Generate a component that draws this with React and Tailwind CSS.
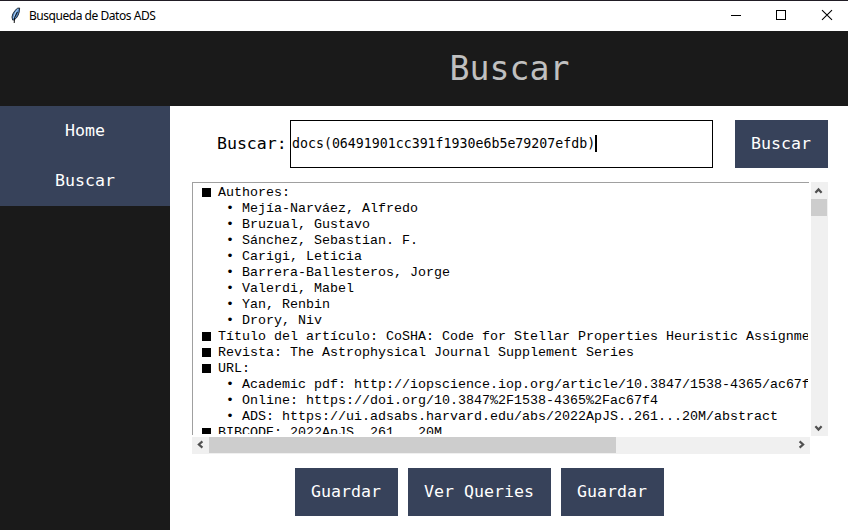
import React from "react";

const mono = "font-['DejaVu_Sans_Mono',monospace]";

const rows = [
  [0, "Authores:"],
  [1, "Mejía-Narváez, Alfredo"],
  [1, "Bruzual, Gustavo"],
  [1, "Sánchez, Sebastian. F."],
  [1, "Carigi, Leticia"],
  [1, "Barrera-Ballesteros, Jorge"],
  [1, "Valerdi, Mabel"],
  [1, "Yan, Renbin"],
  [1, "Drory, Niv"],
  [0, "Título del artículo: CoSHA: Code for Stellar Properties Heuristic Assignme"],
  [0, "Revista: The Astrophysical Journal Supplement Series"],
  [0, "URL:"],
  [1, "Academic pdf: http://iopscience.iop.org/article/10.3847/1538-4365/ac67f"],
  [1, "Online: https://doi.org/10.3847%2F1538-4365%2Fac67f4"],
  [1, "ADS: https://ui.adsabs.harvard.edu/abs/2022ApJS..261...20M/abstract"],
  [0, "BIBCODE: 2022ApJS..261...20M"],
];

function Feather() {
  return (
    <svg width="12" height="18" viewBox="0 0 12 18" className="shrink-0">
      <path d="M2.6 13 2 10 2.8 7 5 3.5 7.5 1.3 9.6 1 9.2 5 8.2 8 6.4 11 4 13Z" fill="#4e86c8" stroke="#26303c" strokeWidth="1" />
      <path d="M8 2.2 5.2 6 3.6 11" fill="none" stroke="#b9d7f2" strokeWidth="1" />
      <path d="M7.4 5 4.6 10.5 4.2 16" fill="none" stroke="#111" strokeWidth="1" />
    </svg>
  );
}

const chevrons = {
  up: "M4.4 10.8 7.5 7.4 10.6 10.8",
  down: "M4.4 7.2 7.5 10.6 10.6 7.2",
  left: "M10.4 4.4 6.9 7.5 10.4 10.6",
  right: "M6.6 4.4 10.1 7.5 6.6 10.6",
};

function Chevron({ to }) {
  return (
    <svg width="17" height="17" viewBox="0 0 17 17" className="block shrink-0">
      <path d={chevrons[to]} fill="none" stroke="#505050" strokeWidth="2.2" />
    </svg>
  );
}

function Button({ children, className }) {
  return (
    <button className={"h-12 shrink-0 bg-[#37425a] pt-px pr-px text-[16.6px] text-white " + className}>
      {children}
    </button>
  );
}

export default function App() {
  return (
    <div className={"flex h-[530px] w-[848px] flex-col overflow-hidden bg-white text-black " + mono}>
      <div className="flex h-[31px] shrink-0 items-center border-t border-[#211d25] pl-[10px] font-['Noto_Sans',sans-serif]">
        <Feather />
        <span className="ml-[7px] w-[127px] text-[12px] tracking-[-0.46px] whitespace-nowrap">Busqueda de Datos ADS</span>
        <svg className="ml-auto" width="118" height="30" viewBox="730 1 118 30" fill="none" stroke="#000">
          <path d="M731 15.5h10M776.5 10.5h9v9h-9z" shapeRendering="crispEdges" />
          <path d="M822 10.2l10 9.6M832 10.2l-10 9.6" strokeWidth="1.1" />
        </svg>
      </div>

      <header className="flex h-[75px] shrink-0 items-center justify-center bg-[#1a1a1a] pt-px pl-[171px] text-[33.2px] text-[#c0c0c0]">
        Buscar
      </header>

      <div className="flex min-h-0 flex-1">
        <nav className="flex w-[170px] shrink-0 flex-col bg-[#1a1a1a] text-[16.6px] text-white">
          <a className="flex h-[50px] items-center justify-center bg-[#37425a]">Home</a>
          <a className="flex h-[50px] items-center justify-center bg-[#37425a]">Buscar</a>
        </nav>

        <main className="flex flex-1 flex-col pt-[14px] pr-5 pl-[22px]">
          <div className="flex h-12 items-center">
            <label className="ml-[25px] w-[73px] shrink-0 pt-px text-[16.6px] tracking-[-0.05px] whitespace-nowrap">Buscar:</label>
            <div className="flex h-12 w-[423px] items-center border border-black pl-px">
              <span className="pb-px text-[13.26px]">docs(06491901cc391f1930e6b5e79207efdb)</span>
              <span className="mt-[-2px] h-[17px] w-[2px] bg-black" />
            </div>
            <Button className="ml-auto w-[93px]">Buscar</Button>
          </div>

          <div className="mt-[14px] flex h-[254px] justify-between">
            <div className="h-[253px] w-[617px] overflow-hidden border-t border-l border-[#a0a0a0] pt-[2px] pr-px pb-px pl-[9px] font-['Liberation_Mono',monospace]">
              <div className="h-[249px] overflow-hidden">
                {rows.map(([level, text]) => (
                  <div key={text} className="flex h-4 items-center text-[13.333px] leading-4 whitespace-pre">
                    {level === 0 ? (
                      <span className="flex h-4 w-4 shrink-0 pt-[3px]">
                        <span className="h-[9px] w-[9px] bg-black" />
                      </span>
                    ) : (
                      <span className="w-10 shrink-0 pl-6">•</span>
                    )}
                    <span>{text}</span>
                  </div>
                ))}
              </div>
            </div>
            <div className="flex w-[17px] flex-col bg-[#f0f0f0]">
              <Chevron to="up" />
              <div className="h-[17px] w-4 bg-[#cdcdcd]" />
              <div className="mt-auto">
                <Chevron to="down" />
              </div>
            </div>
          </div>

          <div className="mt-px flex h-[17px] w-[618px] bg-[#f0f0f0]">
            <Chevron to="left" />
            <div className="h-4 w-[407px] bg-[#cdcdcd]" />
            <div className="ml-auto">
              <Chevron to="right" />
            </div>
          </div>

          <div className="mt-[14px] ml-[103px] flex gap-[10px]">
            <Button className="w-[103px]">Guardar</Button>
            <Button className="w-[143px]">Ver Queries</Button>
            <Button className="w-[103px]">Guardar</Button>
          </div>
        </main>
      </div>
    </div>
  );
}
